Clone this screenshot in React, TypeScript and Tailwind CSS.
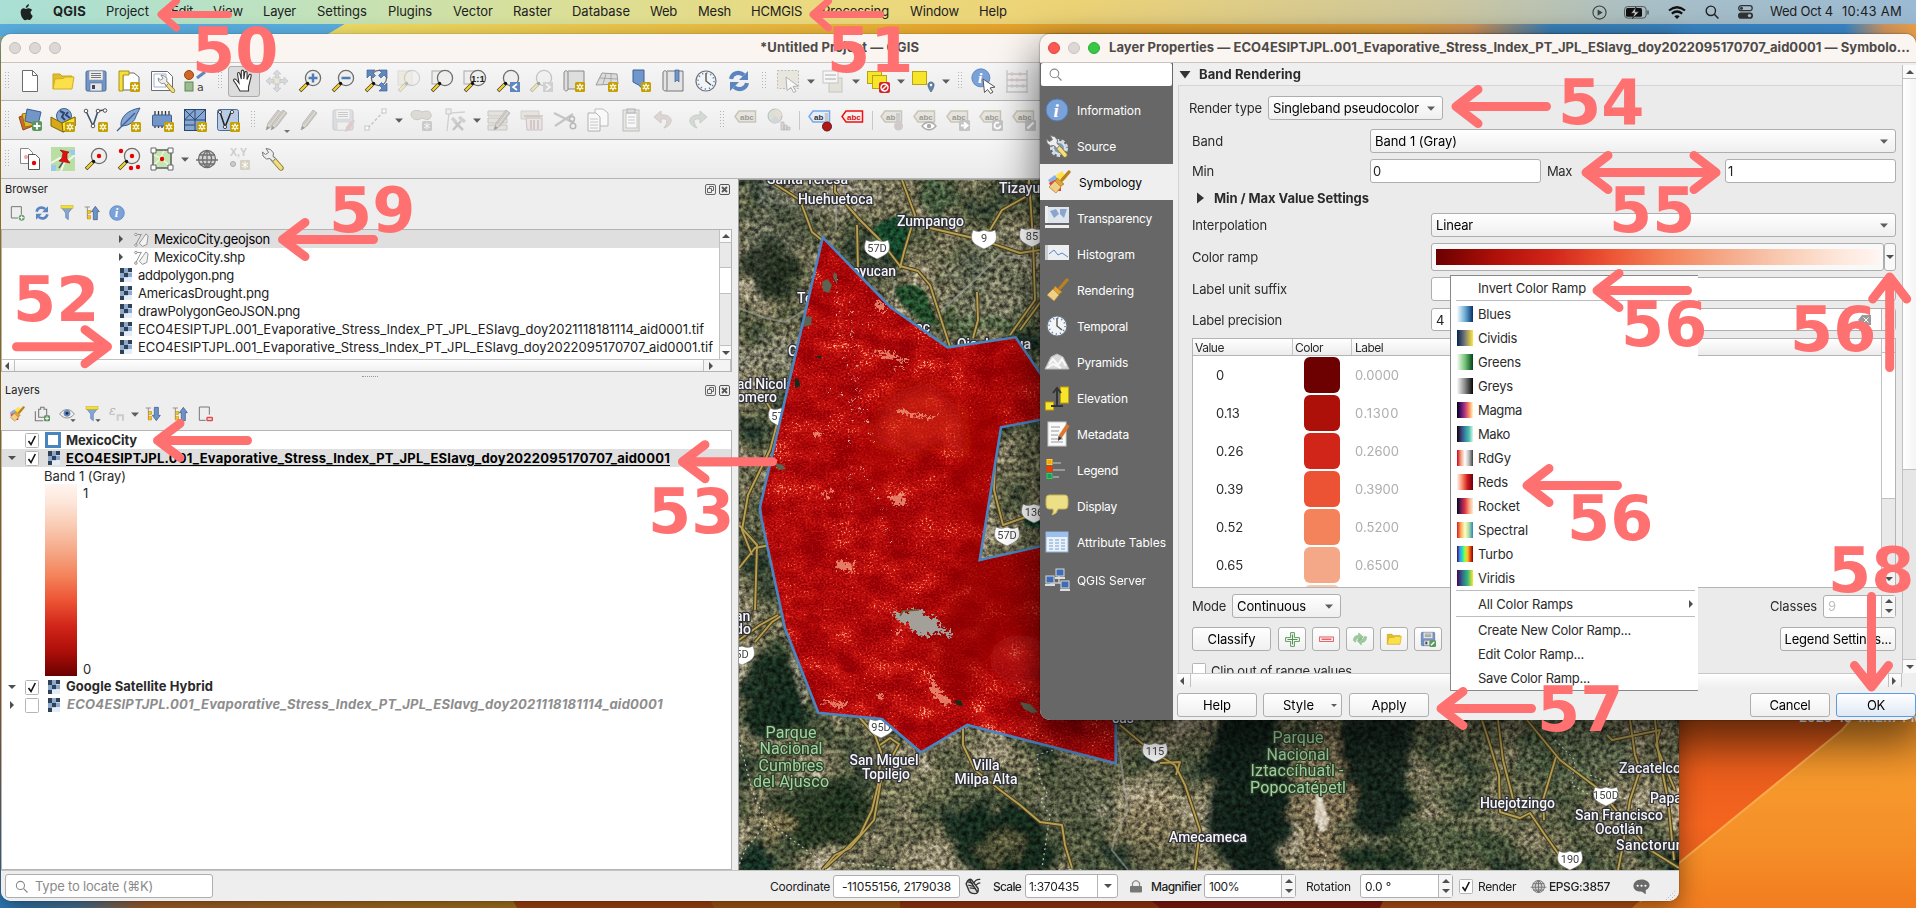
import React, { useLayoutEffect, useRef } from "react";

/* ---------- text with a fixed advance width ---------- */
function T({ w, c = "", flat = false, children }: { w?: number; c?: string; flat?: boolean; children: string }) {
  const ref = useRef<HTMLSpanElement>(null);
  useLayoutEffect(() => {
    const el = ref.current;
    if (!el || !w) return;
    el.style.letterSpacing = "0px";
    const natural = el.getBoundingClientRect().width;
    el.style.letterSpacing = `${(w - natural) / children.length}px`;
  }, [w, children]);
  return (
    <span ref={ref} className={`inline-block shrink-0 whitespace-pre ${flat ? "" : "pt-[2px]"} ${c}`}>
      {children}
    </span>
  );
}

type P = { children?: React.ReactNode; c?: string };
const Ico = ({ children, c = "w-6 h-6" }: P) => (
  <svg viewBox="0 0 24 24" className={`shrink-0 overflow-visible ${c}`} fill="none">
    {children}
  </svg>
);

/* ---------- icon parts ---------- */
const Star = ({ x = 13, y = 13 }: { x?: number; y?: number }) => (
  <g transform={`translate(${x} ${y})`}>
    <rect width="10" height="10" rx="1.5" fill="#c4a000" />
    <path d="M5 1.5v7M1.8 3.2l6.4 3.6M8.2 3.2L1.8 6.8" stroke="#fff" strokeWidth="1.5" />
    <circle cx="5" cy="5" r="1" fill="#c4a000" />
  </g>
);
const Lens = () => (
  <g>
    <path d="M10 14L2 22" stroke="#3b3b2a" strokeWidth="3.600" />
    <path d="M9 15L2.5 21.5" stroke="#f2cf2a" strokeWidth="2.4" />
    <circle cx="15" cy="9" r="7.6" fill="#eeeeec" stroke="#6e6e6e" strokeWidth="1.3" />
    <circle cx="9.6" cy="14.4" r="1.6" fill="#111" />
  </g>
);
const FolderShape = () => (
  <g>
    <path d="M2 20V5h7l2 2h10v4" fill="#e0bd2f" stroke="#c9a41a" />
    <path d="M2 20L4 10l8-.5L14 8h9l-2 12z" fill="#fbe04a" stroke="#d2ad22" />
  </g>
);
const Floppy = () => (
  <g>
    <rect x="2" y="2" width="20" height="20" rx="1.5" fill="#7394c4" stroke="#4c6c9c" />
    <rect x="5" y="2" width="14" height="9" fill="#eeeeec" stroke="#8c9ab0" strokeWidth=".6" />
    <path d="M7 4.5h10M7 6.5h10M7 8.5h10" stroke="#777" strokeWidth="1" />
    <rect x="6" y="14" width="12" height="8" fill="#e6e6e6" stroke="#4c6c9c" strokeWidth=".6" />
    <rect x="8" y="16" width="3" height="4" fill="#445" />
  </g>
);
const Pencil = ({ dx = 0 }: { dx?: number }) => (
  <g transform={`translate(${dx} 0)`}>
    <path d="M3 22l2-7L15 2l4 3L9 18z" fill="#d3cfc8" stroke="#b0aca6" />
    <path d="M6 16L16 3M8 18L18 5" stroke="#b0aca6" strokeWidth=".8" />
    <path d="M3 22l1.3-4 2.5 2z" fill="#888" />
  </g>
);
const Tag = ({ stroke = "#c9c5b8", fill = "#e6e4dc", text = "abc", color = "#999" }: { stroke?: string; fill?: string; text?: string; color?: string }) => (
  <g>
    <path d="M1 8.5L5 3h16.500v11H5z" fill={fill} stroke={stroke} strokeWidth="1.500" />
    <text x="6" y="11.500" fontFamily="Liberation Sans" fontWeight="bold" fontSize="8" fill={color}>
      {text}
    </text>
  </g>
);
const Sync = () => (
  <g fill="none" stroke="#5b85c0" strokeWidth="4">
    <path d="M4 10C5 4 12 2 17 6" />
    <path d="M20 14c-1 6-8 8-13 4" />
    <path d="M21 2v9h-9z" fill="#5b85c0" stroke="none" />
    <path d="M3 22v-9h9z" fill="#5b85c0" stroke="none" />
  </g>
);
const Info = () => (
  <g>
    <circle cx="12" cy="12" r="11" fill="#7aa2d8" stroke="#4f7cb8" />
    <text x="8.500" y="18.500" fontFamily="Liberation Serif" fontStyle="italic" fontWeight="bold" fontSize="19" fill="#fff">
      i
    </text>
  </g>
);
const WrenchShape = () => (
  <g>
    <path d="M12 12l8 9" stroke="#8a7b30" strokeWidth="5.400" strokeLinecap="round" />
    <path d="M12 12l8 9" stroke="#f0dd84" strokeWidth="3.600" strokeLinecap="round" />
    <path d="M5 1.500l4.500 1 3 3.500-.5 3.500 2.500 2-2.500 3-3-3-3.500.5-3.500-3L1.500 5l3 2.500 3-2z" fill="#eee" stroke="#777" strokeWidth="1" />
  </g>
);
const Globe = () => (
  <g fill="#d4d4d4" stroke="#6f6f6f" strokeWidth="1.3">
    <circle cx="12" cy="12" r="8.500" />
    <path d="M1 13h22M4 8h16M4.500 17h15M12 3.500v17M12 3.500c-6 5-6 12 0 17M12 3.500c6 5 6 12 0 17" fill="none" />
  </g>
);
const Clock = () => (
  <g>
    <circle cx="12" cy="12" r="10" fill="#f2f4f6" stroke="#6f7378" strokeWidth="1.2" />
    <circle cx="12" cy="12" r="8" fill="none" stroke="#5b85c0" strokeWidth="1.6" strokeDasharray="1.2 2.990" />
    <path d="M12 4v8l5 4" stroke="#555" strokeWidth="1.4" />
  </g>
);
const Raster = () => (
  <svg viewBox="0 0 12 14" className="h-[14px] w-[13px] shrink-0" shapeRendering="crispEdges">
    <rect width="12" height="14" fill="#c3d3ea" />
    <path d="M0 0h4v5h-4zM4 5h4v4h-4zM8 0h4v4h-4zM0 10h4v4h-4z" fill="#2f4157" />
    <path d="M0 5h4v5h-4zM4 0h4v5h-4zM8 5h4v5h-4z" fill="#8fa9cd" />
    <path d="M4 10h4v4h-4zM8 9h4v5h-4z" fill="#e4edf7" />
  </svg>
);
const Vect = () => (
  <Ico c="h-[15px] w-[15px]">
    <g stroke="#8f8f8f" strokeWidth="1.500" fill="#f3f3f3">
      <path d="M3 20L12 3M3 4h8" />
      <path d="M15 9l4-6 3.500 3-2 14-7 3-5-5z" />
      <circle cx="3" cy="21" r="2" />
      <circle cx="3" cy="4" r="2" />
    </g>
  </Ico>
);
const Brush = ({ palette = false }: { palette?: boolean }) => (
  <Ico c="h-full w-full">
    {palette && (
      <g>
        <path d="M9 5l6-4 5 7-8 6z" fill="#ffe34d" />
        <path d="M1 10l7-5 4 6-7 5z" fill="#8db0e4" />
        <path d="M2 13l6-3 6 5 0 6-8 0z" fill="#e8402e" />
      </g>
    )}
    <path d="M22 2l-7 8" stroke="#b98120" strokeWidth="3.400" strokeLinecap="round" />
    <path d="M10 8l7 6-4 3-5-5z" fill="#e0a33c" stroke="#a87820" strokeWidth=".7" />
    <path d="M8 11l6 6-5 6-7-6z" fill="#f0cf86" stroke="#b58a3a" strokeWidth=".8" />
  </Ico>
);
const Funnel = () => (
  <g>
    <path d="M3 3h18l-7 9v10l-4-3v-7z" fill="#84a6d6" stroke="#5a7db0" />
    <rect x="3" y="1" width="18" height="4" fill="#f7e02c" stroke="#bda71a" strokeWidth=".7" />
  </g>
);
const TreeArrow = ({ down = false }: { down?: boolean }) => (
  <g>
    <path d="M1 3h8M5 3v17M5 11h5M5 20h5" stroke="#888" strokeWidth="1.300" />
    <rect x="5" y="8" width="5" height="5" fill="#f5c51c" stroke="#b8860b" strokeWidth=".7" />
    <rect x="5" y="16" width="5" height="5" fill="#f5c51c" stroke="#b8860b" strokeWidth=".7" />
    <path d={down ? "M17 22l-6-8h3V2h6v12h3z" : "M17 2l-6 8h3v12h6V10h3z"} fill="#6c93c8" stroke="#35527e" />
  </g>
);
const Dot = ({ x, y, r = 2.2 }: { x: number; y: number; r?: number }) => <circle cx={x} cy={y} r={r} fill="#e60000" />;

/* ---------- toolbar pieces ---------- */
const Cell = ({ children, c = "w-[33px]" }: P) => <div className={`flex h-full shrink-0 items-center justify-center ${c}`}>{children}</div>;
const I = ({ children, c = "" }: P) => (
  <Cell>
    <Ico c={`w-6 h-6 ${c}`}>{children}</Ico>
  </Cell>
);
const Grip = ({ c = "w-4" }: P) => (
  <Cell c={c}>
    <svg width="6" height="18" viewBox="0 0 6 18">
      <path d="M1.500 0v18M4.500 0v18" stroke="#b4b4b4" strokeWidth="1" strokeDasharray="1 2" />
    </svg>
  </Cell>
);
const Caret = ({ c = "w-[12px]" }: P) => (
  <Cell c={c}>
    <svg width="8" height="5" viewBox="0 0 8 5">
      <path d="M0 .5h8L4 4.800z" fill="#5d5d5d" />
    </svg>
  </Cell>
);
const Sep = ({ c }: P) => (
  <Cell c={c}>
    <div className="h-[19px] w-px bg-[#c8c8c8]" />
  </Cell>
);

const bar = "flex shrink-0 items-center border-b border-[#b5b5b5] bg-linear-to-b from-[#f6f6f6] to-[#ebebeb]";
const off = "opacity-60";

function Toolbars() {
  return (
    <>
      <div className={`${bar} h-[38px] pb-px`}>
        <Grip c="w-[12.5px]" />
        <I>
          <path d="M4.500 1.500h10l5 5v16h-15z" fill="#fff" stroke="#6c6c6c" />
          <path d="M14.500 1.500v5h5" stroke="#6c6c6c" />
        </I>
        <I><FolderShape /></I>
        <I><Floppy /></I>
        <I>
          <path d="M6 4h11l5 4v13H6z" fill="#fff" stroke="#6c6c6c" />
          <path d="M2 2h10v4H6v16H2z" fill="#f4df3c" stroke="#a8941a" />
          <Star x={13} y={13} />
        </I>
        <I>
          <path d="M1.500 2.500h16l5 5v14h-21z" fill="#fff" stroke="#6c6c6c" />
          <path d="M4 5h12v13H4z" stroke="#9ab4da" />
          <g transform="translate(7 5) scale(.8)"><WrenchShape /></g>
        </I>
        <I>
          <circle cx="6" cy="6" r="4.500" fill="#d0662a" stroke="#9a4514" />
          <path d="M14 9l8-6" stroke="#5f86bd" strokeWidth="3" />
          <rect x="2" y="13" width="8" height="9" fill="#9bbb90" stroke="#5c8a52" />
          <text x="14" y="22" fontFamily="DejaVu Sans" fontSize="11" fill="#444">a</text>
        </I>
        <Grip />
        <Cell>
          <div className="flex h-[31px] w-[32px] items-center justify-center rounded-[3px] border border-[#acacac] bg-[#dcdcdc]">
            <Ico>
              <path
                d="M8 22l-4-7-2.500-3.500c0-2 2-2 3-.5L7 14 5.500 5c.2-2 2-2 2.500 0l1.300 5V2.500c.3-1.800 2.200-1.800 2.500 0V10l1-6.500c.4-1.500 2.300-1.300 2.300.3L15 10.500l2-4.500c.8-1.400 2.500-.8 2.200.8L17.500 14l-1 4v4z"
                fill="#fff"
                stroke="#333"
                strokeWidth="1.100"
              />
            </Ico>
          </div>
        </Cell>
        <I c={off}>
          <path d="M8 8h7v7H8z" fill="#e4dfc4" stroke="#c9c4ac" />
          <path d="M12 1l4 4h-2.500v4h-3V5H8zM12 23l4-4h-2.500v-4h-3v4H8zM1 12l4-4v2.500h4v3H5V16zM23 12l-4-4v2.500h-4v3h4V16z" fill="#c4c9d0" stroke="#a4a9b2" strokeWidth=".7" />
        </I>
        <I><Lens /><path d="M15 4.500v9M10.500 9h9" stroke="#4f7cb8" strokeWidth="2.500" /></I>
        <I><Lens /><path d="M10.500 9h9" stroke="#4f7cb8" strokeWidth="2.500" /></I>
        <I>
          <Lens />
          <path d="M3 1h8L8.500 3.500l3 3-2.500 2.500-3-3L3 9zM23 1h-8l2.500 2.500-3 3L17 9l3-3 3 3zM23 22v-8l-2.500 2.500-3-3L15 16l3 3-3 3z" fill="#5f86bd" stroke="#3f629a" strokeWidth=".7" />
        </I>
        <I c={off}><rect x="1" y="2" width="14" height="14" fill="#e9e5d2" stroke="#ccc" /><g opacity=".4"><Lens /></g></I>
        <I><rect x="2" y="2" width="10" height="13" fill="#eee" stroke="#aaa" /><Lens /></I>
        <I>
          <rect x="1" y="2" width="10" height="13" fill="#eee" stroke="#aaa" />
          <Lens />
          <text x="8" y="12.500" fontFamily="Liberation Sans" fontWeight="bold" fontSize="9.500" fill="#222">1:1</text>
        </I>
        <I>
          <Lens />
          <rect x="14" y="13" width="10" height="10" fill="#5f86bd" />
          <path d="M21 15l-4 3 4 3" stroke="#fff" strokeWidth="1.700" />
        </I>
        <I c="opacity-35">
          <Lens />
          <rect x="14" y="13" width="10" height="10" fill="#999" />
          <path d="M17 15l4 3-4 3" stroke="#fff" strokeWidth="1.700" />
        </I>
        <I><path d="M2 4c0-3 4-3 4 0v16c0 3-4 2-4 0zM6 2h16v18H6" fill="#dedede" stroke="#888" /><Star x={13} y={13} /></I>
        <I>
          <path d="M7 4l15 1 1 10-22 1z" fill="#dcdcdc" stroke="#9a9a9a" />
          <path d="M5 9l17 1M11 5L8 15M16 5v11" stroke="#9a9a9a" strokeWidth=".8" />
          <Star x={13} y={13} />
        </I>
        <I><path d="M5 1h11v20l-5.500-5L5 13z" fill="#6f97cc" stroke="#3c5f94" /><Star x={13} y={13} /></I>
        <I>
          <path d="M2 4c0-3 4-3 4 0v16c0 3-4 2-4 0zM6 2h16v20H5" fill="#e4e4e4" stroke="#777" />
          <path d="M14 1h4v12l-2-2-2 2z" fill="#6f97cc" stroke="#3c5f94" strokeWidth=".7" />
        </I>
        <I><Clock /></I>
        <I><Sync /></I>
        <Grip />
        <I c={off}>
          <rect x="1.500" y="1.500" width="21" height="18" fill="#e2dfd0" stroke="#999" strokeDasharray="2 1.500" />
          <path d="M10 8l12 9-5 .5 3 5-2.500 1-2.500-5-4 3z" fill="#fff" stroke="#888" />
        </I>
        <Caret />
        <I c={off}>
          <rect x="8" y="9" width="13" height="14" fill="#ddd9c8" stroke="#aaa" />
          <rect x="2" y="2" width="15" height="12" fill="#fafafa" stroke="#aaa" />
          <path d="M4 6h11M4 10h11" stroke="#bbb" strokeWidth="2" />
        </I>
        <Caret />
        <I>
          <rect x="1.500" y="2.500" width="14" height="12" fill="#f7e52c" stroke="#b9a40e" />
          <rect x="6.500" y="6.500" width="14" height="13" fill="#f7e52c" stroke="#b9a40e" />
          <rect x="13" y="13" width="11" height="11" rx="2" fill="#d0262a" />
          <circle cx="18.500" cy="18.500" r="3.500" stroke="#fff" strokeWidth="1.400" />
          <path d="M16 21l5-5" stroke="#fff" strokeWidth="1.400" />
        </I>
        <Caret />
        <I>
          <rect x="1.500" y="2.500" width="14" height="13" fill="#f7e52c" stroke="#b9a40e" />
          <path d="M20 23c-5-7-3-10 0-10s5 3 0 10z" fill="#6485aa" stroke="#3e5c7e" strokeWidth=".7" />
          <circle cx="20" cy="16" r="1.200" fill="#fff" />
        </I>
        <Caret />
        <Grip />
        <I>
          <g transform="translate(-1 -1) scale(.82)"><Info /></g>
          <path d="M11 10l12 8-5 1 3 4-2.500 1.500-3-4-3 3z" fill="#fff" stroke="#555" />
        </I>
        <I c="opacity-45">
          <path d="M2 1v22M22 1v22M1 23h22M2 5h20M2 11h20M2 17h20" stroke="#999" strokeWidth="1.300" />
          <path d="M7 5h.1M15 5h.1M7 11h.1M12 11h.1" stroke="#c99" strokeWidth="3.600" strokeLinecap="round" />
          <path d="M7 17h.1M12 17h.1M18 17h.1" stroke="#aaa" strokeWidth="3.600" strokeLinecap="round" />
        </I>
      </div>

      <div className={`${bar} h-[39px]`}>
        <Grip c="w-[12.5px]" />
        <I>
          <path d="M1 9l9-3 5 12-10 4z" fill="#cf6a2c" stroke="#8f4414" />
          <path d="M4 6l10-2 3 13-10 2z" fill="#e6b820" stroke="#957610" />
          <path d="M9 1l14 3-3 13-13-4z" fill="#7296c8" stroke="#3c5f94" />
          <rect x="14" y="13" width="10" height="10" rx="2" fill="#5d9460" />
          <path d="M19 14.500v7M15.500 18h7" stroke="#fff" strokeWidth="1.800" />
        </I>
        <I>
          <circle cx="13" cy="8" r="7.500" fill="#86a6d4" stroke="#3c5f94" />
          <path d="M9 3l4 2-2 4 3 3M17 4l-2 3 4 3" stroke="#2d466e" strokeWidth="2" />
          <path d="M0 9l11 6 13-6v9l-12 6L0 18z" fill="#d6a916" stroke="#7f640a" />
          <path d="M11 15l13-6v9l-12 6z" fill="#f7e52c" stroke="#7f640a" />
          <Star x={14} y={14} />
        </I>
        <I>
          <path d="M2 3l7 15M9 18l5-15 6-1" stroke="#3e526c" strokeWidth="1.600" />
          <circle cx="2" cy="3" r="1.800" fill="#fff" stroke="#555" />
          <circle cx="9" cy="18" r="1.800" fill="#fff" stroke="#555" />
          <circle cx="14" cy="3" r="1.800" fill="#fff" stroke="#555" />
          <circle cx="21" cy="2.500" r="1.800" fill="#fff" stroke="#555" />
          <Star x={14} y={14} />
        </I>
        <I>
          <path d="M23 0C10 2 3 10 4 18c9 0 14-5 15-10z" fill="#86a6d4" stroke="#3c5f94" />
          <path d="M0 23L18 5" stroke="#3c5f94" strokeWidth="1.200" />
          <Star x={14} y={14} />
        </I>
        <I>
          <path d="M5 3v17M8.500 3v17M12 3v17M15.500 3v17M19 3v8" stroke="#333" strokeWidth="1.300" />
          <rect x="2.500" y="7" width="19" height="11" rx="1" fill="#7396c8" stroke="#3c5f94" />
          <Star x={14} y={14} />
        </I>
        <I>
          <rect x="1.500" y="1.500" width="21" height="21" fill="#86a6d4" stroke="#2d466e" />
          <path d="M1.500 12h21M12 1.500v21M1.500 1.500L12 12M22.500 1.500L12 12M1.500 17h10M1.500 12L12 1.500" stroke="#2d466e" />
          <Star x={14} y={14} />
        </I>
        <I>
          <rect x="1.500" y="1.500" width="21" height="21" rx="2" fill="#b9cce6" stroke="#4c6c9c" />
          <path d="M4 4l5 15L15 4" stroke="#222" strokeWidth="1.500" />
          <circle cx="4" cy="4" r="1.600" fill="#fff" stroke="#444" />
          <circle cx="9" cy="19" r="1.600" fill="#fff" stroke="#444" />
          <circle cx="16" cy="4" r="1.600" fill="#fff" stroke="#444" />
          <Star x={14} y={14} />
        </I>
        <Grip />
        <I c="opacity-80">
          <Pencil dx={-2} />
          <Pencil dx={3} />
          <path d="M19 22h6l-3 3z" fill="#555" />
        </I>
        <I c="opacity-80"><Pencil dx={0} /></I>
        <I>
          <g opacity=".45">
            <rect x="2" y="2" width="20" height="20" rx="1.500" fill="#c4c8ce" stroke="#9a9ea4" />
            <rect x="5" y="2" width="14" height="9" fill="#f4f4f4" stroke="#aaa" strokeWidth=".6" />
            <path d="M7 4.500h10M7 6.500h10M7 8.500h10" stroke="#999" />
            <rect x="6" y="14" width="12" height="8" fill="#eee" stroke="#aaa" strokeWidth=".6" />
            <path d="M22 11l-7 8-1 5 4-2 6-9z" fill="#c9a0a0" />
          </g>
        </I>
        <I c="opacity-80">
          <path d="M4 20L20 3" stroke="#bbb" strokeWidth="1.500" strokeDasharray="3 2" />
          <rect x="1" y="18" width="4" height="4" fill="#fff" stroke="#bbb" />
          <rect x="18" y="1" width="4" height="4" fill="#fff" stroke="#bbb" />
        </I>
        <Caret />
        <I c="opacity-60"><path d="M2 7c0-6 8-5 11-3 5-2 10-1 9 5-2 4-6 2-9 1-4 3-10 2-11-3z" fill="#cfcdc0" stroke="#aaa" /><g opacity=".7"><rect x="13" y="13" width="10" height="10" rx="1.500" fill="#999" /><path d="M18 14.500v7M15 16l6 4M21 16l-6 4" stroke="#fff" /></g></I>
        <I c="opacity-60">
          <path d="M5 23L7 5l16-1M7 5" stroke="#bbb" strokeWidth="1.300" />
          <rect x="4" y="1" width="5" height="5" fill="#eee" stroke="#aaa" />
          <path d="M11 22L19 13M12 13l9 9" stroke="#aaa" strokeWidth="2.500" />
          <path d="M17 9l6 5M10 10l4 4" stroke="#bbb" strokeWidth="3.500" />
        </I>
        <Caret />
        <I c="opacity-80">
          <path d="M1 3h19v5H1zM1 10h19v5H1zM1 17h19v5H1z" fill="#e2dfd6" stroke="#bbb" />
          <Pencil dx={4} />
        </I>
        <I c={off}>
          <path d="M1 3h18v8H1z" fill="#dedad0" stroke="#bbb" />
          <path d="M6 10h16v12H7z" fill="#e6dfdf" stroke="#b4a0a0" />
          <path d="M4 8h19M11 12v9M14 12v9M18 12v9" stroke="#b4a0a0" strokeWidth="1.500" />
        </I>
        <I c="opacity-80">
          <path d="M1 5l20 10M2 18L20 6" stroke="#bbb" strokeWidth="2.200" />
          <circle cx="20" cy="18" r="2.800" stroke="#aaa" strokeWidth="1.500" />
          <circle cx="19" cy="11" r="2.500" stroke="#aaa" strokeWidth="1.500" />
        </I>
        <I c={off}><path d="M9 1h8l5 4v13H9z" fill="#fff" stroke="#999" /><path d="M2 5h8l4 4v14H2z" fill="#fff" stroke="#888" /><path d="M4 11h8M4 14h8M4 17h8M4 20h8" stroke="#aaa" /></I>
        <I c={off}><rect x="4" y="2" width="16" height="21" fill="#e4e2da" stroke="#999" /><rect x="7" y="5" width="11" height="15" fill="#fff" stroke="#aaa" /><rect x="8" y="1" width="8" height="4" fill="#ccc" stroke="#888" /><path d="M9 9h7M9 12h7M9 15h7" stroke="#aaa" /></I>
        <I c={off}><path d="M9 3L2 9l7 6v-4c6-1 8 2 3 9 10-3 10-14-3-13z" fill="#cfc4c0" stroke="#b9aeaa" /></I>
        <I c={off}><path d="M15 3l7 6-7 6v-4c-6-1-8 2-3 9C2 17 2 6 15 7z" fill="#c2cac4" stroke="#a9b4ac" /></I>
        <Grip />
        <I><Tag /></I>
        <I c="opacity-80">
          <circle cx="8" cy="8" r="7" fill="#d4dccf" stroke="#aaa" />
          <path d="M8 8V1a7 7 0 017 7z" fill="#e4d8cc" /><path d="M8 8l5 5a7 7 0 01-10 0z" fill="#ccd0d8" />
          <path d="M14 14h3v8h-3zM17 17h3v5h-3zM20 19h3v3h-3z" fill="#d9cdcd" stroke="#aaa" strokeWidth=".7" />
        </I>
        <Sep c="w-[8px]" />
        <I>
          <Tag stroke="#78a8e8" fill="#e4eefb" text="ab" color="#333" />
          <path d="M18.500 5v12" stroke="#c8c8c8" strokeWidth="3.500" />
          <circle cx="19" cy="18.500" r="4.500" fill="#b01818" stroke="#701010" />
        </I>
        <I><Tag stroke="#f01010" fill="#fdeeee" color="#d01010" /></I>
        <Sep c="w-[6px]" />
        <I><Tag text="ab" /><path d="M18 5v14" stroke="#ccc" strokeWidth="4" /><circle cx="18.500" cy="18" r="4.500" fill="#d0caca" /></I>
        <I><Tag /><path d="M9 18c4-5 10-5 14 0-4 5-10 5-14 0z" fill="#fff" stroke="#aaa" strokeWidth="1.300" /><circle cx="16" cy="18" r="2.200" fill="#aaa" /></I>
        <I><Tag /><rect x="13" y="12" width="11" height="11" rx="1.500" fill="#c4c4c4" /><path d="M15 17.500h5M18 14.500l3.500 3-3.500 3" stroke="#fff" strokeWidth="2" /></I>
        <I><Tag /><rect x="13" y="12" width="11" height="11" rx="1.500" fill="#c4c4c4" /><path d="M21.500 17.500a3 3 0 11-1.500-2.600" stroke="#fff" strokeWidth="1.800" /></I>
        <I><Tag /><rect x="13" y="12" width="11" height="11" rx="1.500" fill="#c4c4c4" /><path d="M15.500 20.500l6-6" stroke="#fff" strokeWidth="2.200" /></I>
      </div>

      <div className={`${bar} h-[39px]`}>
        <Grip c="w-[12.5px]" />
        <I>
          <path d="M2.500 1.500h8l4 4v11h-12z" fill="#fff" stroke="#888" />
          <circle cx="8" cy="10" r="2" fill="#f7a0a0" />
          <path d="M10.500 7.500h7l4 4v11h-11z" fill="#fff" stroke="#555" />
          <Dot x={16} y={16} />
        </I>
        <I>
          <rect x="0" y="0" width="24" height="24" fill="#b9dfa4" />
          <path d="M0 16l9-5 6 4 9-7M10 24l4-10" stroke="#f2f6ee" strokeWidth="2" />
          <path d="M18 3h6v5h-4zM0 18h5v6H0z" fill="#9cc8ee" />
          <path d="M9 3l9 2-2 2 0 5 3 4-11-2 3-3 1-5z" fill="#e01010" stroke="#900" strokeWidth=".6" />
          <path d="M12 15l-4 6" stroke="#555" strokeWidth="1.500" />
        </I>
        <I><Lens /><Dot x={15} y={9} /></I>
        <I><Lens /><Dot x={15} y={9} /><Dot x={4} y={4} /><Dot x={14} y={21} /><Dot x={21} y={20} /></I>
        <I>
          <rect x="3" y="3" width="18" height="18" fill="#c5e6b0" stroke="#666" strokeWidth="1.600" />
          <path d="M4 18l5-5 5-9M4 8l8 4 8 7" stroke="#f4f8e8" strokeWidth="1.200" />
          <path d="M1 1h5v5H1zM18 1h5v5h-5zM1 18h5v5H1zM18 18h5v5h-5z" fill="#fff" stroke="#666" />
          <Dot x={12} y={12} />
        </I>
        <Caret />
        <I><Globe /></I>
        <I>
          <text x="2" y="9" fontFamily="Liberation Sans" fontWeight="bold" fontSize="10.500" fill="#ccc">X,Y</text>
          <circle cx="5" cy="17" r="2.500" fill="#ccc" stroke="#aaa" />
          <rect x="12" y="13" width="10" height="10" rx="1" fill="#d5d2c4" />
          <path d="M17 14.500v7M14 16l6 4M20 16l-6 4" stroke="#fff" />
        </I>
        <I><WrenchShape /></I>
      </div>
    </>
  );
}

/* ---------- small controls ---------- */
const DockHead = ({ title, w }: { title: string; w: number }) => (
  <div className="flex h-[21px] shrink-0 items-center pl-1 text-[11px] text-[#222]">
    <T w={w} flat>{title}</T>
    <div className="ml-auto flex gap-[3px] pr-2">
      <svg width="11" height="11" viewBox="0 0 11 11" fill="none" stroke="#666">
        <rect x=".5" y=".5" width="10" height="10" rx="1.500" />
        <path d="M4.500 4V2.500h4v4H7M2.500 4.500h4v4h-4z" />
      </svg>
      <svg width="11" height="11" viewBox="0 0 11 11" fill="none" stroke="#555">
        <rect x=".5" y=".5" width="10" height="10" rx="1.500" />
        <path d="M3 3l5 5M8 3L3 8" strokeWidth="1.800" />
      </svg>
    </div>
  </div>
);
const MiniIcon = ({ children, c = "w-[25.2px]" }: P) => (
  <Cell c={c}>
    <Ico c="h-4 w-4">{children}</Ico>
  </Cell>
);
const Arrow = ({ d }: { d: "up" | "down" | "left" | "right" }) => {
  const p = { up: "M1 7h8L5 3z", down: "M1 3h8L5 7z", left: "M7 1v8L3 5z", right: "M3 1v8l4-4z" }[d];
  return (
    <svg width="10" height="10" viewBox="0 0 10 10" className="shrink-0">
      <path d={p} fill="#4f4f4f" />
    </svg>
  );
};
const Check = ({ on = true }: { on?: boolean }) => (
  <svg width="14" height="15" viewBox="0 0 14 15" className="shrink-0">
    <rect x=".5" y=".5" width="13" height="14" rx="1" fill="#fff" stroke="#b5b5b5" />
    {on && <path d="M3.500 8l2.500 3.500L10.300 3" fill="none" stroke="#111" strokeWidth="1.600" />}
  </svg>
);

const files: [string, number][] = [
  ["addpolygon.png", 96],
  ["AmericasDrought.png", 131],
  ["drawPolygonGeoJSON.png", 162],
  ["ECO4ESIPTJPL.001_Evaporative_Stress_Index_PT_JPL_ESIavg_doy2021118181114_aid0001.tif", 566],
  ["ECO4ESIPTJPL.001_Evaporative_Stress_Index_PT_JPL_ESIavg_doy2022095170707_aid0001.tif", 575],
];

function BrowserDock() {
  return (
    <section className="flex h-[194px] shrink-0 flex-col">
      <DockHead title="Browser" w={43} />
      <div className="flex h-[29px] shrink-0 items-center pb-[4px] pl-[3px]">
        <MiniIcon><path d="M3.500 2.500h15v12M3.500 2.500v17h10" stroke="#777" strokeWidth="1.500" /><circle cx="19" cy="19" r="4.500" fill="#6c9c6c" /><path d="M19 16v6M16 19h6" stroke="#fff" strokeWidth="1.500" /></MiniIcon>
        <MiniIcon><Sync /></MiniIcon>
        <MiniIcon><Funnel /></MiniIcon>
        <MiniIcon><TreeArrow /></MiniIcon>
        <MiniIcon><Info /></MiniIcon>
      </div>
      <div className="flex h-[143px] w-[731px] shrink-0 flex-col border border-[#b4b4b4] bg-white">
        <div className="flex h-[129px]">
          <div className="flex w-[717px] flex-col text-[13px] text-[#1c1c1c]">
            {[
              ["MexicoCity.geojson", 116, "bg-[#dfdfdf] text-black"],
              ["MexicoCity.shp", 91, ""],
            ].map(([n, w, c]) => (
              <div key={n as string} className={`flex h-[18px] items-center pl-[114px] ${c}`}>
                <Arrow d="right" />
                <div className="w-[8px]" />
                <Vect />
                <div className="w-[5px]" />
                <T w={w as number}>{n as string}</T>
              </div>
            ))}
            {files.map(([n, w]) => (
              <div key={n} className="flex h-[18px] items-center gap-[6px] pl-[117px]">
                <Raster />
                <T w={w}>{n}</T>
              </div>
            ))}
          </div>
          <div className="flex w-[12px] flex-col items-center border-l border-[#c0c0c0] bg-[#e9e9e9]">
            <div className="flex h-[13px] w-full items-center justify-center border-b border-[#c0c0c0] bg-[#fafafa]"><Arrow d="up" /></div>
            <div className="h-[24px]" />
            <div className="h-[27px] w-full border-y border-[#c0c0c0] bg-white" />
            <div className="mt-auto flex h-[14px] w-full items-center justify-center border-t border-[#c0c0c0] bg-[#fafafa]"><Arrow d="down" /></div>
          </div>
        </div>
        <div className="flex flex-1 items-center border-t border-[#c0c0c0] bg-linear-to-b from-white to-[#f0f0f0]">
          <div className="flex h-full w-[13px] items-center border-r border-[#c0c0c0]"><Arrow d="left" /></div>
          <div className="ml-auto flex h-full w-[28px] items-center border-x border-[#c0c0c0] bg-[#f4f4f4] pl-0.5"><Arrow d="right" /></div>
        </div>
      </div>
    </section>
  );
}

const Disc = ({ open, hidden = false }: { open?: boolean; hidden?: boolean }) => (
  <div className="flex w-[23px] items-center pl-[5px]">{!hidden && <Arrow d={open ? "down" : "right"} />}</div>
);

function LayersDock() {
  return (
    <section className="flex min-h-0 flex-1 flex-col">
      <DockHead title="Layers" w={35} />
      <div className="flex h-[29px] shrink-0 items-center pb-[3px] pl-[3px]">
        <Cell c="w-[25.2px]"><div className="h-4 w-4"><Brush palette /></div></Cell>
        <MiniIcon><path d="M2 8v14h12M7 5v12h12V5h-4V2h-5v3z" stroke="#777" strokeWidth="1.600" /><rect x="15" y="14" width="9" height="9" rx="2" fill="#5d9460" /><path d="M19.500 15.500v6M16.500 18.500h6" stroke="#fff" strokeWidth="1.500" /></MiniIcon>
        <MiniIcon><path d="M1 12c6-9 16-9 22 0-6 8-16 8-22 0z" fill="#eee" stroke="#888" strokeWidth="1.300" /><circle cx="12" cy="11" r="5" fill="#5f86bd" /><circle cx="12" cy="11" r="2" fill="#223" /><path d="M17 20h8l-4 4z" fill="#555" /></MiniIcon>
        <MiniIcon><Funnel /><path d="M17 20h8l-4 4z" fill="#555" /></MiniIcon>
        <MiniIcon><text x="0" y="14" fontFamily="DejaVu Serif" fontStyle="italic" fontSize="19" fill="#b5b5b5">ε</text><path d="M13 22v-8h8v8" stroke="#ccc" strokeWidth="3" /></MiniIcon>
        <Caret c="w-[10px]" />
        <MiniIcon c="w-[27px]"><TreeArrow down /></MiniIcon>
        <MiniIcon><TreeArrow /></MiniIcon>
        <MiniIcon><path d="M18.500 13V1.500h-15v20H13" stroke="#777" strokeWidth="1.500" /><rect x="14" y="16" width="10" height="7" rx="2" fill="#e04848" /><path d="M16 19.500h6" stroke="#fff" strokeWidth="2" /></MiniIcon>
      </div>
      <div className="flex w-[731px] flex-1 flex-col border border-[#b4b4b4] bg-white text-[13px] font-bold text-[#2a2a2a]">
        <div className="flex h-[18px] items-center">
          <Disc hidden />
          <Check />
          <div className="ml-[6px] h-[16px] w-[16px] border-[3px] border-[#4a84bd] bg-white" />
          <T w={71} c="ml-[5px]">MexicoCity</T>
        </div>
        <div className="flex h-[18px] items-center bg-[#dfdfdf] text-black">
          <Disc open />
          <Check />
          <div className="ml-[8px]"><Raster /></div>
          <T w={604} c="ml-[6px] underline underline-offset-2">ECO4ESIPTJPL.001_Evaporative_Stress_Index_PT_JPL_ESIavg_doy2022095170707_aid0001</T>
        </div>
        <div className="flex h-[17px] items-center pl-[42px] font-normal">
          <T w={82}>Band 1 (Gray)</T>
        </div>
        <div className="flex h-[194px] pl-[43px] font-normal">
          <div className="h-[192px] w-[32px] bg-[linear-gradient(to_top,#6b0000,#ad0f09_13%,#d12519_26%,#ec5334_39%,#f4825a_52%,#f5a887_65%,#f9cab2_78%,#fde5d8_90%,#fff5f0)]" />
          <div className="flex h-[194px] flex-col justify-between pl-[6px]">
            <span className="leading-[18px]">1</span>
            <span className="leading-[17px]">0</span>
          </div>
        </div>
        <div className="flex h-[18px] items-center">
          <Disc open />
          <Check />
          <div className="ml-[8px]"><Raster /></div>
          <T w={147} c="ml-[6px]" flat>Google Satellite Hybrid</T>
        </div>
        <div className="flex h-[18px] items-center text-[#8d8d8d]">
          <Disc />
          <Check on={false} />
          <div className="ml-[8px]"><Raster /></div>
          <T w={596} c="ml-[7px] italic" flat>ECO4ESIPTJPL.001_Evaporative_Stress_Index_PT_JPL_ESIavg_doy2021118181114_aid0001</T>
        </div>
      </div>
    </section>
  );
}

/* ---------- map ---------- */
const AREA =
  "822.7,237.3 890,306.7 947.7,347.3 1015.7,337.3 1042,376 1110,420 1042,419.500 1001,427.300 979.700,560 1042,546 1116,560 1115.700,763.300 967.300,725 921,752.300 881.700,719 818.300,712.700 785,628.300 761.700,520 760,507.300";

const roads = [
  "M775 184L800 200L812 232L822 240",
  "M835 180V192L860 220L880 240L900 266L918 271L930 285L950 347",
  "M902 180L915 215L904 252L900 268",
  "M857 225L858 270",
  "M930 228L982 240L1020 253L1040 250",
  "M990 230L1002 210L1027 196L1029 180L1033 240L1035 300L1010 335",
  "M977 292L978 320L973 338",
  "M1042 300L1020 330",
  "M765 400L778 420L770 450L748 495L742 530L752 555",
  "M739 525L757 545L755 610",
  "M739 568L755 548L770 545",
  "M739 640L760 625L778 615",
  "M755 642L772 622L781 616",
  "M996 440L994 490L1003 525L1040 512",
  "M858 716L875 735L881 752L878 785L872 810L860 835L845 850L825 868",
  "M881 780L874 820L850 848L835 855L822 870",
  "M880 745L890 738L899 744L893 755",
  "M963 728L963 745L975 770L1000 790L1020 805L1040 822L1062 825L1065 845L1072 868",
  "M1120 725L1150 750L1175 765L1185 785L1200 830L1195 870",
  "M1160 763L1180 762L1176 775",
  "M1482 720L1490 745L1499 775L1500 812L1520 818L1530 813L1545 835L1570 870",
  "M1498 720L1503 760L1512 795L1516 812",
  "M1527 720L1560 760L1600 790L1620 815L1650 850L1679 868",
  "M1556 757L1543 800L1544 820",
  "M1607 735L1612 740L1660 730L1656 745L1675 790",
  "M1630 720L1635 755L1640 770L1630 800L1622 850L1618 870",
  "M1655 720L1658 750L1668 800L1674 860",
];

const Lab = ({ x, y, t, w, a = "start", g = false, s = 14 }: { x: number; y: number; t: string; w?: number; a?: "start" | "middle"; g?: boolean; s?: number }) => (
  <text x={x} y={y} textAnchor={a} textLength={w} fontSize={s} fontFamily="Roboto" fontWeight={g ? "400" : "500"} fill={g ? "#a4d3a2" : "#f6f6f6"} stroke={g ? "#2b4128" : "#2f303a"} strokeWidth="2.600" strokeLinejoin="round" paintOrder="stroke">
    {t}
  </text>
);
const Shield = ({ x, y, t }: { x: number; y: number; t: string }) => (
  <g>
    <path
      d={`M${x - 11} ${y - 8}q5 3 11 0q6 3 11 0q3 8 0 12q-2 3-11 7q-9-4-11-7q-3-4 0-12z`}
      fill="#fff"
      stroke="#777"
      strokeWidth=".6"
    />
    <text x={x} y={y + 4} textAnchor="middle" fontFamily="Roboto" fontSize="11" fill="#444">
      {t}
    </text>
  </g>
);

function MapCanvas() {
  return (
    <svg width="941" height="691" viewBox="738 179 941 691" className="block shrink-0">
      <defs>
        <filter id="blur" x="-50%" y="-50%" width="200%" height="200%"><feGaussianBlur stdDeviation="9" /></filter>
        <filter id="soft" x="-50%" y="-50%" width="200%" height="200%"><feGaussianBlur stdDeviation="1" /></filter>
        <filter id="rough" x="-20%" y="-20%" width="140%" height="140%">
          <feTurbulence type="fractalNoise" baseFrequency="0.05" numOctaves="4" seed="5" result="n" />
          <feDisplacementMap in="SourceGraphic" in2="n" scale="45" xChannelSelector="R" yChannelSelector="G" />
          <feGaussianBlur stdDeviation="3" />
        </filter>
        <filter id="bits" x="-20%" y="-20%" width="140%" height="140%">
          <feTurbulence type="fractalNoise" baseFrequency="0.3" numOctaves="2" seed="5" result="n" />
          <feDisplacementMap in="SourceGraphic" in2="n" scale="14" xChannelSelector="R" yChannelSelector="G" />
        </filter>
        <filter id="land" x="0" y="0" width="100%" height="100%" colorInterpolationFilters="sRGB">
          <feTurbulence type="fractalNoise" baseFrequency="0.018" numOctaves="6" seed="31" />
          <feColorMatrix values="1.5 0 0 0 -.25  1.5 0 0 0 -.25  1.5 0 0 0 -.25  0 0 0 0 1" />
          <feComponentTransfer>
            <feFuncR type="table" tableValues=".1 .2 .31 .39 .47 .58 .68" />
            <feFuncG type="table" tableValues=".18 .25 .34 .39 .45 .55 .64" />
            <feFuncB type="table" tableValues=".14 .19 .24 .29 .35 .45 .55" />
          </feComponentTransfer>
        </filter>
        <filter id="grain" x="0" y="0" width="100%" height="100%" colorInterpolationFilters="sRGB">
          <feTurbulence type="fractalNoise" baseFrequency="0.22" numOctaves="4" seed="4" />
          <feColorMatrix values="0 1.8 0 0 -.4  0 1.8 0 0 -.4  0 1.8 0 0 -.4  0 0 0 0 1" />
        </filter>
        <filter id="heat" x="0" y="0" width="100%" height="100%" colorInterpolationFilters="sRGB">
          <feTurbulence type="fractalNoise" baseFrequency="0.5 0.55" numOctaves="2" seed="8" result="f" />
          <feTurbulence type="fractalNoise" baseFrequency="0.035 0.05" numOctaves="5" seed="23" result="c" />
          <feComposite in="f" in2="c" operator="arithmetic" k1="0" k2=".62" k3=".48" k4="0" result="m" />
          <feColorMatrix in="m" values="2.500 0 0 0 -.98  2.500 0 0 0 -.98  2.500 0 0 0 -.98  0 0 0 0 1" />
          <feComponentTransfer>
            <feFuncR type="table" tableValues=".58 .65 .69 .73 .78 .82 .9 .95 .97" />
            <feFuncG type="table" tableValues="0 .02 .04 .05 .08 .12 .3 .55 .72" />
            <feFuncB type="table" tableValues=".02 .03 .04 .05 .07 .09 .2 .42 .6" />
          </feComponentTransfer>
        </filter>
        <clipPath id="aoi"><polygon points={AREA} /></clipPath>
      </defs>
      <rect x="738" y="179" width="941" height="691" fill="#4c5138" filter="url(#land)" />
      <g filter="url(#rough)">
        <ellipse cx="770" cy="268" rx="28" ry="32" fill="#14241a" opacity=".85" />
        <ellipse cx="780" cy="225" rx="40" ry="22" fill="#3f4c3a" opacity=".6" />
        <ellipse cx="775" cy="355" rx="45" ry="18" fill="#8b8878" opacity=".6" />
        <ellipse cx="990" cy="285" rx="50" ry="45" fill="#777a66" opacity=".5" />
        <ellipse cx="820" cy="195" rx="70" ry="14" fill="#8f8d80" opacity=".5" />
        <ellipse cx="935" cy="200" rx="16" ry="20" fill="#2f5034" opacity=".6" />
        <ellipse cx="985" cy="325" rx="45" ry="10" fill="#3f5a38" opacity=".6" />
        <ellipse cx="775" cy="695" rx="32" ry="50" fill="#0f2319" opacity=".9" />
        <ellipse cx="820" cy="815" rx="55" ry="35" fill="#1b2c1d" opacity=".8" />
        <ellipse cx="755" cy="862" rx="20" ry="16" fill="#12271c" opacity=".9" />
        <ellipse cx="775" cy="822" rx="14" ry="12" fill="#8a7c55" opacity=".9" />
        <ellipse cx="930" cy="790" rx="60" ry="18" fill="#6e7150" opacity=".5" />
        <ellipse cx="1005" cy="845" rx="52" ry="42" fill="#13261a" opacity=".9" />
        <ellipse cx="1005" cy="848" rx="20" ry="16" fill="#5e5c3e" opacity=".9" />
        <ellipse cx="1075" cy="800" rx="36" ry="40" fill="#3f4a32" opacity=".7" />
        <ellipse cx="1150" cy="830" rx="36" ry="40" fill="#857656" opacity=".5" />
        <ellipse cx="1250" cy="790" rx="42" ry="95" fill="#0b1c14" opacity=".95" />
        <ellipse cx="1378" cy="770" rx="36" ry="70" fill="#0b1c14" opacity=".9" />
        <ellipse cx="1378" cy="862" rx="38" ry="14" fill="#10241a" opacity=".85" />
        <ellipse cx="1322" cy="790" rx="24" ry="80" fill="#75684c" opacity=".85" />
        <ellipse cx="1450" cy="845" rx="60" ry="24" fill="#3a4a30" opacity=".5" />
        <ellipse cx="1575" cy="750" rx="60" ry="34" fill="#41553a" opacity=".6" />
      </g>
      <g filter="url(#soft)">
        <path d="M872 232q12-18 40-15l-3 25-10 24-22-22z" fill="#17452a" />
        <path d="M895 288q20-8 30 4l12 32q-12 4-25-12-16-10-17-24z" fill="#234a2a" />
        <path d="M1315 792l8 6 6 24-6 12-8-14z" fill="#d8cdbc" />
        <path d="M1021 518l21-10v20l-16-2z" fill="#0e3322" />
        <path d="M789 650q12 10 20 50l-6 6q-12-30-14-56z" fill="#97907c" opacity=".6" />
      </g>
      <g fill="none" stroke="#23301f" strokeWidth="1.600" opacity=".5" filter="url(#soft)">
        <path d="M1382 870l-12-40M1375 850q30-20 80-35M1378 858q45-12 100-10M1380 850q20 12 50 20M1378 846q30 2 110 22M1376 842q20-30 70-50" />
      </g>
      <rect x="738" y="179" width="941" height="691" filter="url(#grain)" className="mix-blend-overlay" opacity=".6" />
      <g fill="none" stroke="#a9aba6" strokeWidth="2" opacity=".55">
        <path d="M739 308L765 318L785 322L805 310M940 312L975 280L1000 255L1042 262M836 180V230M892 300L895 280" />
        <path d="M1118 740L1125 790L1128 810L1115 835L1112 850L1128 870" />
      </g>
      <g fill="none" stroke="#e6e6de" strokeWidth="1.200" strokeDasharray="2 3" opacity=".75">
        <path d="M739 740L752 790L765 820L820 860L895 868M765 825L745 850L739 865M1053 750L1037 755L1040 780L1048 795L1040 800L1050 815L1042 868M1318 722L1316 740M1318 834L1318 850L1326 855L1322 870M1555 740L1575 760L1572 785L1590 795M1590 775L1608 782L1612 795L1660 808" />
      </g>
      <g fill="none" strokeLinejoin="round">
        {roads.map((d) => <path key={d} d={d} stroke="#4a401f" strokeWidth="4" />)}
        {roads.map((d) => <path key={d} d={d} stroke="#b8a055" strokeWidth="1.900" />)}
      </g>
      <Lab x={767} y={184} w={81} t="Santa Teresa" />
      <Lab x={798} y={204} w={75} t="Huehuetoca" />
      <Lab x={999} y={193} t="Tizayuca" />
      <Lab x={897} y={226} w={67} t="Zumpango" />
      <Lab x={826} y={276} w={70} t="Teoloyucan" />
      <Lab x={797} y={303} t="Tepotzotlán" />
      <Lab x={895} y={332} w={35} t="tepec" />
      <Lab x={957} y={349} w={74} t="Ojo de Agua" />
      <Lab x={788} y={356} t="Cuautitlán" />
      <Lab x={737} y={389} w={64} t="ad Nicolás" />
      <Lab x={737} y={402} w={40} t="omero" />
      <Shield x={781} y={416} t="57D" />
      <Shield x={877} y={248} t="57D" />
      <Shield x={984} y={238} t="9" />
      <Shield x={1032} y={236} t="85" />
      <Shield x={1034} y={512} t="136" />
      <Shield x={1007} y={535} t="57D" />
      <Shield x={881} y={727} t="95D" />

      <g clipPath="url(#aoi)">
        <rect x="755" y="230" width="365" height="540" fill="#b90e10" filter="url(#heat)" />
        <g filter="url(#blur)">
          <ellipse cx="1015" cy="590" rx="65" ry="55" fill="#8c0006" opacity=".55" />
          <ellipse cx="985" cy="470" rx="30" ry="80" fill="#9a0008" opacity=".5" />
          <ellipse cx="965" cy="645" rx="36" ry="40" fill="#8c0006" opacity=".5" />
          <ellipse cx="1035" cy="375" rx="28" ry="24" fill="#97000a" opacity=".5" />
          <ellipse cx="880" cy="460" rx="30" ry="24" fill="#a00808" opacity=".4" />
          <path d="M870 440l20-45 40-15 30 30 5 50-30-20-20 15z" fill="#cf2417" opacity=".55" />
          <ellipse cx="1020" cy="660" rx="30" ry="25" fill="#c01c14" opacity=".5" />
        </g>
        <g fill="#f3a183" opacity=".75" filter="url(#bits)">
          <path d="M874 350l16 2 12 7 8 0-4 3-26-6zM888 368l16-2v3zM820 494l12-5v4zM838 560l16 4-2 8-16-4zM812 430l9 2-2 8zM822 492l8 2-3 6zM892 632l7-4 2 8zM876 692l9 4-4 5zM896 408l24 7 18 0-4 4-32-4zM875 300l10 4 0 10-8-4zM820 700l30 3-10 6zM930 670l8 20 16 12-8 4-16-14zM890 496l12-4 4 12-12 2z" />
        </g>
        <g stroke="#d8dcd0" strokeWidth="1.500" opacity=".8" filter="url(#bits)" fill="none" strokeDasharray="2 9">
          <path d="M835 280l6 60 14 50-6 60 2 60M850 300l8 90 20 60M860 470l20 30 10 50M830 390l30 20" />
        </g>
        <g filter="url(#bits)">
          <path d="M892 610l12 3 10-4 10 1 1 6 14 2-2 6 14 8 2 4-9-1-6-4-12 6-12-4-5-9-12-3z" fill="#a3a09a" />
        </g>
        <path d="M900 616l3-5 16-1" fill="none" stroke="#6b6030" strokeWidth="1.500" />
        <path d="M822 282l5-3 5 6-3 8-6-2zM805 316l7 1-1 8-8 2zM834 272l3 3 0 10-4-8zM775 463l8 2 3 4-8 1zM1020 702l10 2 8 8-6 1-8-4z" fill="#5c6350" />
        <path d="M954 700l7 1 2 5-6-1zM816 356l6 0-2 3zM795 378l4 2 1 6-5 2z" fill="#0f2c1c" />
      </g>
      <polygon points={AREA} fill="none" stroke="#4d84c0" strokeWidth="2.600" />

      <Lab x={735} y={621} t="an" />
      <Lab x={735} y={634} t="do" />
      <Shield x={742} y={654} t="5D" />
      <Shield x={1155} y={751} t="115" />
      <Shield x={1606} y={795} t="150D" />
      <Shield x={1570} y={859} t="190" />
      <Shield x={1070} y={877} t="" />
      <Lab x={791} y={738} a="middle" g s={16} w={51} t="Parque" />
      <Lab x={791} y={754} a="middle" g s={16} w={63} t="Nacional" />
      <Lab x={791} y={771} a="middle" g s={16} w={65} t="Cumbres" />
      <Lab x={791} y={787} a="middle" g s={16} w={76} t="del Ajusco" />
      <Lab x={884} y={765} a="middle" w={69} t="San Miguel" />
      <Lab x={886} y={779} a="middle" w={48} t="Topilejo" />
      <Lab x={986} y={770} a="middle" w={27} t="Villa" />
      <Lab x={986} y={784} a="middle" w={63} t="Milpa Alta" />
      <Lab x={1112} y={723} t="cas" />
      <Lab x={1169} y={842} w={78} t="Amecameca" />
      <Lab x={1298} y={743} a="middle" g s={16} w={51} t="Parque" />
      <Lab x={1298} y={760} a="middle" g s={16} w={63} t="Nacional" />
      <Lab x={1297} y={776} a="middle" g s={16} w={93} t="Iztaccíhuatl -" />
      <Lab x={1298} y={793} a="middle" g s={16} w={96} t="Popocatépetl" />
      <Lab x={1480} y={808} w={75} t="Huejotzingo" />
      <Lab x={1619} y={773} t="Zacatelco" />
      <Lab x={1650} y={803} t="Papalotla" />
      <Lab x={1619} y={820} a="middle" w={88} t="San Francisco" />
      <Lab x={1619} y={834} a="middle" w={48} t="Ocotlán" />
      <Lab x={1616} y={850} w={72} t="Sanctorum" />
      <path d="M738.500 870V179.500H1679" fill="none" stroke="#a0a0a0" />
    </svg>
  );
}

const Field = ({ children, c = "" }: P) => (
  <div className={`flex shrink-0 items-center rounded-[3px] border border-[#aeaeae] bg-white text-[#222] ${c}`}>{children}</div>
);
const Spin = ({ c = "w-[14px]" }: P) => (
  <div className={`ml-auto flex h-full flex-col items-center justify-center border-l border-[#b5b5b5] bg-[#f6f6f6] ${c}`}>
    <Arrow d="up" />
    <Arrow d="down" />
  </div>
);

function StatusBar() {
  return (
    <footer className="flex h-[31px] shrink-0 items-center border-t border-[#c4c4c4] bg-[#eee] text-[12px] text-[#222]">
      <Field c="ml-1 h-[24px] w-[208px] pl-[9px]">
        <Ico c="h-[13px] w-[13px]"><circle cx="10" cy="10" r="7.500" stroke="#888" strokeWidth="2" /><path d="M16 16l7 7" stroke="#888" strokeWidth="2.200" /></Ico>
        <T w={118} c="ml-[7px] text-[13px] text-[#8a8a8a]">Type to locate (⌘K)</T>
      </Field>
      <div className="w-[557px]" />
      <T w={60}>Coordinate</T>
      <Field c="ml-[3px] h-[23px] w-[127px] justify-center"><T w={109}>-11055156, 2179038</T></Field>
      <div className="ml-[4px]">
        <Ico c="h-[17px] w-[17px]"><path d="M8 3l11 17M3 8q4-9 8-5l9 12q1 7-5 7-6 0-8-4z" stroke="#333" strokeWidth="2" fill="#ddd" /><path d="M14 7q3-6 9-5M17 10q3-3 6-3M5 5l8 3M6 10l8 2M8 14l9 1" stroke="#333" strokeWidth="1.800" /></Ico>
      </div>
      <T w={28} c="ml-[12px] font-medium">Scale</T>
      <Field c="ml-[4px] h-[24px] w-[93px] pl-[3px]">
        <T w={50}>1:370435</T>
        <div className="ml-auto flex h-full w-[20px] items-center justify-center border-l border-[#b5b5b5]"><Arrow d="down" /></div>
      </Field>
      <div className="ml-[12px]">
        <Ico c="h-[17px] w-[12px]"><path d="M5 11V5q7-10 14 0v6" stroke="#888" strokeWidth="2.500" /><rect x="0" y="11" width="24" height="13" rx="2" fill="#777" /></Ico>
      </div>
      <T w={50} c="ml-[9px] font-medium">Magnifier</T>
      <Field c="ml-[3px] h-[24px] w-[92px] pl-[4px]"><T w={30}>100%</T><Spin /></Field>
      <T w={45} c="ml-[10px]">Rotation</T>
      <Field c="ml-[9px] h-[24px] w-[93px] pl-[4px]"><T w={26}>0.0 °</T><Spin /></Field>
      <div className="ml-[6px]"><Check /></div>
      <T w={38} c="ml-[5px]">Render</T>
      <div className="ml-[14px]"><Ico c="h-[17px] w-[17px]"><Globe /></Ico></div>
      <T w={61} c="ml-[2px] font-medium">EPSG:3857</T>
      <div className="ml-[23px]">
        <Ico c="h-[17px] w-[17px]"><path d="M12 2c-14 0-15 16-3 17 6 0 5 2 9 4V17C28 12 23 2 12 2z" fill="#6a6a6a" /><path d="M6.500 11h.1M12 11h.1M17.500 11h.1" stroke="#fff" strokeWidth="3" strokeLinecap="round" /></Ico>
      </div>
      <svg width="12" height="12" viewBox="0 0 12 12" className="ml-auto mr-[2px] self-end">
        <path d="M1 11L11 1M5 11l6-6M9 11l2-2" stroke="#aaa" strokeWidth="1" strokeDasharray="1 2" />
      </svg>
    </footer>
  );
}

/* ---------- layer properties dialog ---------- */
const side: [string, number, React.ReactNode][] = [
  ["Information", 64, <Info />],
  ["Source", 39, <g><circle cx="14" cy="14" r="7" fill="#dfe8f2" stroke="#d4dbe2" strokeWidth="4" strokeDasharray="3 2" /><circle cx="14" cy="14" r="5" fill="#7f9fca" /><WrenchShape /></g>],
  ["Symbology", 63, null],
  ["Transparency", 75, <g><rect x="2" y="1" width="22" height="16" fill="#dfe5ee" /><path d="M5 5l6-2 3 5-5 4zM15 3h7l-3 9-4-4z" fill="#8ba6cc" /><path d="M0 19h24v3H0z" fill="#eee" /><rect width="3" height="17" fill="#eee" /></g>],
  ["Histogram", 58, <g><rect x="1" y="3" width="23" height="15" fill="#eceff2" /><path d="M4 12l5-4 4 5 4-2 6 4" stroke="#5b85c0" /><rect y="3" width="3" height="15" fill="#ccc" /></g>],
  ["Rendering", 57, null],
  ["Temporal", 51, <Clock />],
  ["Pyramids", 51, <g><path d="M6 7l6-3 6 3 6 12H0z" fill="#d9d9d9" stroke="#bbb" /><path d="M4 14l4-5 5 6 4-6 4 7M2 18l6-4 8 4" stroke="#f8f8f8" strokeWidth="2" /></g>],
  ["Elevation", 51, <g><rect x="15.500" y="1" width="8" height="16" fill="#f7e52c" stroke="#c4a000" /><rect x=".5" y="16" width="8" height="8" fill="#f7e52c" stroke="#c4a000" /><path d="M12 21V3M8 7l4-5 4 5M6 20h12" stroke="#333" strokeWidth="2" /></g>],
  ["Metadata", 52, <g><rect x="3" y="0" width="18" height="24" fill="#fafafa" stroke="#ccc" /><path d="M6 5h9M6 9h8M6 13h7M6 17h12M6 20h12" stroke="#999" /><path d="M23 3l-8 12" stroke="#e0762a" strokeWidth="4" /><path d="M13.500 14l3.500 2-4 3z" fill="#333" /></g>],
  ["Legend", 41, <g><path d="M8 5h8M8 12h12M8 19h6" stroke="#999" strokeWidth="2" /><rect x="2" y="1.500" width="5" height="5" fill="#f5a800" stroke="#fc3" /><rect x="2" y="8.500" width="5" height="5" fill="#d84800" stroke="#f30" /><rect x="2" y="15.500" width="5" height="5" fill="#1f9a50" stroke="#3c6" /></g>],
  ["Display", 40, <path d="M4 1h16q3 0 3 4v6q0 4-3 4h-7q-1 5-6 6 2-3 1-6H4q-3 0-3-4V5q0-4 3-4z" fill="#ecdf86" stroke="#c4b45a" />],
  ["Attribute Tables", 89, <g><rect x="1" y="2" width="22" height="20" fill="#e9f1fa" stroke="#8fb2dc" /><rect x="1" y="2" width="22" height="5" fill="#9cc0ea" /><path d="M4 10h4M10 10h4M16 10h4M4 13h4M10 13h4M16 13h4M4 16h4M10 16h4M16 16h4M4 19h4M10 19h4M16 19h4" stroke="#7ba0cc" /></g>],
  ["QGIS Server", 69, <g><path d="M14 8v7M5 15h14" stroke="#ccc" strokeWidth="1.500" /><g stroke="#d8d8d8"><rect x="11" y="1" width="8" height="7" fill="#3d6db5" /><rect x="1" y="8" width="8" height="7" fill="#3d6db5" /><rect x="16" y="13" width="8" height="7" fill="#3d6db5" /></g><path d="M10 10h10M0 17h10M15 22h10" stroke="#ddd" strokeWidth="2" /></g>],
];

const Combo = ({ text, w, c, car = "w-[22px]" }: { text: string; w: number; c: string; car?: string }) => (
  <div className={`flex h-6 shrink-0 items-center rounded-[3px] border border-[#aeaeae] bg-linear-to-b from-white to-[#efefef] pl-1 text-black ${c}`}>
    <T w={w}>{text}</T>
    <div className="ml-auto"><Caret c={car} /></div>
  </div>
);
const Btn = ({ children, c }: P) => (
  <div className={`flex h-6 shrink-0 items-center justify-center rounded-[3px] border border-[#aeaeae] bg-linear-to-b from-white to-[#f0f0f0] text-black ${c}`}>{children}</div>
);
const Row = ({ children, c = "" }: P) => <div className={`flex shrink-0 items-center pl-[13px] ${c}`}>{children}</div>;
const FL = ({ w, c, children }: { w: number; c: string; children: string }) => (
  <div className={`flex shrink-0 items-center ${c}`}><T w={w}>{children}</T></div>
);

const classes = [
  ["0", "0.0000", "bg-[#6d0000]"],
  ["0.13", "0.1300", "bg-[#ad0f09]"],
  ["0.26", "0.2600", "bg-[#d12519]"],
  ["0.39", "0.3900", "bg-[#ec5334]"],
  ["0.52", "0.5200", "bg-[#f4825a]"],
  ["0.65", "0.6500", "bg-[#f5a887]"],
  ["", "", "bg-[#f9cab2]"],
];

function Dialog() {
  return (
    <div className="absolute left-[1040px] top-[34px] flex h-[686px] w-[876px] flex-col overflow-hidden rounded-[10px] bg-[#efefef] text-[13px] text-[#2b2b2b] shadow-[0_18px_40px_4px_rgba(0,0,0,0.5),0_0_2px_rgba(0,0,0,0.6)]">
      <header className="flex h-[29px] shrink-0 items-center gap-2 border-b border-[#c9c4c1] bg-[#fbf5f1] pl-2">
        <i className="h-3 w-3 rounded-full border border-[#e0443e] bg-[#fc5753]" />
        <i className="h-3 w-3 rounded-full border border-[#c8c4c1] bg-[#dcd8d5]" />
        <i className="h-3 w-3 rounded-full border border-[#2aae34] bg-[#36c846]" />
        <T w={801} flat c="ml-[1px] font-bold text-[#4d4a48]">Layer Properties — ECO4ESIPTJPL.001_Evaporative_Stress_Index_PT_JPL_ESIavg_doy2022095170707_aid0001 — Symbolo...</T>
      </header>
      <div className="flex min-h-0 flex-1">
        <aside className="flex w-[133px] shrink-0 flex-col bg-[#676767] text-[12px] text-white">
          <div className="mx-px flex h-[23px] items-center rounded-[2px] bg-white pl-2">
            <Ico c="h-[13px] w-[13px]"><circle cx="10" cy="10" r="8" stroke="#888" strokeWidth="2" /><path d="M16 16l7 7" stroke="#888" strokeWidth="2.200" /></Ico>
          </div>
          <div className="h-[6px]" />
          {side.map(([n, w, ic]) => (
            <div key={n} className={`flex h-9 shrink-0 items-center ${n === "Symbology" ? "bg-[#efefef] pl-[7px] text-black" : n === "QGIS Server" ? "mt-[2px] pl-[5px]" : "pl-[5px]"}`}>
              <div className="h-6 w-6 shrink-0">{ic ? <Ico>{ic}</Ico> : <Brush palette={n === "Symbology"} />}</div>
              <T w={w} c="ml-2">{n}</T>
            </div>
          ))}
        </aside>
        <div className="flex w-[743px] shrink-0 flex-col">
          <div className="flex h-[610px] shrink-0">
            <div className="flex w-[729px] flex-col">
              <div className="flex h-[22px] shrink-0 items-center pl-[6px]">
                <svg width="12" height="9" viewBox="0 0 12 9"><path d="M.5 1h11L6 8.500z" fill="#333" /></svg>
                <T w={102} c="ml-[8px] font-bold">Band Rendering</T>
              </div>
              <div className="ml-[5px] flex h-[588px] flex-col overflow-hidden border-l border-t border-[#d4d4d4] bg-[#ebebeb]">
                <div className="mt-[10px] flex h-6 shrink-0 items-center pl-[10px]">
                  <FL w={73} c="w-[79px]">Render type</FL>
                  <Combo c="w-[175px]" w={146} text="Singleband pseudocolor" />
                </div>
                <Row c="mt-[9px] h-6">
                  <FL w={31} c="w-[178px]">Band</FL>
                  <Combo c="w-[526px]" w={82} text="Band 1 (Gray)" />
                </Row>
                <Row c="mt-[6px] h-6">
                  <FL w={22} c="w-[178px]">Min</FL>
                  <Field c="h-6 w-[171px] pl-[2px]"><T>0</T></Field>
                  <FL w={25} c="ml-[6px] w-[178px]">Max</FL>
                  <Field c="h-6 w-[171px] pl-[2px]"><T>1</T></Field>
                </Row>
                <Row c="h-[30px] pl-[17px]">
                  <svg width="9" height="12" viewBox="0 0 9 12"><path d="M1 .5v11L8 6z" fill="#333" /></svg>
                  <T w={155} c="ml-[9px] font-bold">Min / Max Value Settings</T>
                </Row>
                <Row c="h-6">
                  <FL w={75} c="w-[239px]">Interpolation</FL>
                  <Combo c="w-[465px]" w={37} text="Linear" />
                </Row>
                <Row c="mt-[6px] h-[28px]">
                  <FL w={66} c="w-[239px]">Color ramp</FL>
                  <div className="flex h-[28px] w-[453px] items-center justify-center rounded-[3px] border border-[#aeaeae] bg-[#f9f9f9]">
                    <div className="h-4 w-[443px] bg-[linear-gradient(to_right,#6b0000,#ad0f09_13%,#d12519_26%,#ec5334_39%,#f4825a_52%,#f5a887_65%,#f9cab2_78%,#fde5d8_90%,#fff5f0)]" />
                  </div>
                  <div className="flex h-[28px] w-[12px] items-center justify-center rounded-[3px] border border-[#aeaeae] bg-[#f9f9f9]"><Arrow d="down" /></div>
                </Row>
                <Row c="mt-[6px] h-6">
                  <FL w={95} c="w-[239px]">Label unit suffix</FL>
                  <Field c="h-6 w-[465px]" />
                </Row>
                <Row c="mt-[7px] h-[23px]">
                  <FL w={90} c="w-[239px]">Label precision</FL>
                  <Field c="h-[23px] w-[465px] pl-[4px]">
                    <T>4</T>
                    <svg width="13" height="10" viewBox="0 0 13 10" className="ml-auto mr-[10px]"><path d="M0 5l4-5h9v10H4z" fill="#999" /><path d="M5.500 2.500l5 5M10.500 2.500l-5 5" stroke="#fff" /></svg>
                    <div className="flex h-full"><Spin /></div>
                  </Field>
                </Row>
                <Row c="mt-[7px] h-[250px]">
                  <div className="flex h-full w-[704px] border border-[#b4b4b4] bg-white">
                    <div className="flex flex-1 flex-col overflow-hidden">
                      <div className="flex h-[17px] shrink-0 border-b border-[#b4b4b4] bg-linear-to-b from-white to-[#ececec] text-[12px] leading-[17px]">
                        <div className="w-[100px] border-r border-[#c4c4c4] pl-[2px]"><T w={29} flat>Value</T></div>
                        <div className="w-[59px] border-r border-[#c4c4c4] pl-[2px]"><T w={28} flat>Color</T></div>
                        <div className="pl-[3px]"><T w={28} flat>Label</T></div>
                      </div>
                      {classes.map(([v, l, bg], i) => (
                        <div key={i} className="flex h-[38px] shrink-0 items-center">
                          <div className="flex w-[111px] pl-[23px]"><T>{v}</T></div>
                          <div className={`h-9 w-9 rounded-[6px] ${bg}`} />
                          <div className="flex pl-[15px] text-[#adadad]"><T w={l ? 44 : undefined}>{l}</T></div>
                        </div>
                      ))}
                    </div>
                    <div className="flex w-[14px] flex-col border-l border-[#c0c0c0] bg-[#e9e9e9]">
                      <div className="flex h-[14px] items-center justify-center border-b border-[#c0c0c0] bg-[#fafafa]"><Arrow d="up" /></div>
                      <div className="h-[146px] border-b border-[#c0c0c0] bg-white" />
                      <div className="mt-auto flex h-[16px] items-center justify-center bg-[#f4f4f4]"><Arrow d="down" /></div>
                    </div>
                  </div>
                </Row>
                <Row c="mt-[6px] h-6">
                  <FL w={34} c="w-[40px]">Mode</FL>
                  <Combo c="w-[109px]" w={69} text="Continuous" />
                  <FL w={47} c="ml-[429px] w-[53px]">Classes</FL>
                  <Field c="h-[23px] w-[73px] pl-[4px]"><T c="text-[#c0c0c0]">9</T><Spin /></Field>
                </Row>
                <Row c="mt-[9px] h-6 gap-[6px]">
                  <Btn c="mr-px w-[79px]"><T w={48}>Classify</T></Btn>
                  <Btn c="w-[28px]"><Ico c="h-[15px] w-[15px]"><path d="M9 1h6v8h8v6h-8v8H9v-8H1V9h8z" fill="#fff" stroke="#4f8f4f" strokeWidth="1.500" /><path d="M12 4v16M4 12h16" stroke="#4f8f4f" strokeWidth="1.800" /></Ico></Btn>
                  <Btn c="w-[28px]"><Ico c="h-[15px] w-[15px]"><rect x="1" y="8" width="22" height="7" fill="#fff" stroke="#e05050" strokeWidth="1.500" /><path d="M4 11.500h16" stroke="#e05050" strokeWidth="2.200" /></Ico></Btn>
                  <Btn c="w-[28px]"><Ico c="h-4 w-4"><path d="M2 14q1-8 8-7V3l7 6-7 6v-4q-4 0-5 6zM22 9q-1 9-8 8v4l-6-6 6-6v4q4 0 5-5z" fill="#9ccb9c" stroke="#7fb27f" strokeWidth=".8" /></Ico></Btn>
                  <Btn c="w-[28px]"><Ico c="h-4 w-4"><FolderShape /></Ico></Btn>
                  <Btn c="w-[28px]"><Ico c="h-4 w-4"><Floppy /><rect x="14" y="14" width="10" height="10" rx="2" fill="#5b9a5b" /><path d="M16.500 21.500l5-5" stroke="#fff" strokeWidth="2" /></Ico></Btn>
                  <Btn c="ml-[332px] w-[116px]"><T w={107}>Legend Settings...</T></Btn>
                </Row>
                <Row c="mt-[12px] h-[15px] items-start gap-[5px]">
                  <Check on={false} />
                  <T w={141} c="-mt-[3px]">Clip out of range values</T>
                </Row>
              </div>
            </div>
            <div className="mt-[2px] flex w-[14px] flex-col border-l border-[#c0c0c0] bg-[#e6e6e6]">
              <div className="flex h-[14px] items-center justify-center border-b border-[#c0c0c0] bg-[#fafafa]"><Arrow d="up" /></div>
              <div className="h-[391px] border-b border-[#c0c0c0] bg-linear-to-r from-white to-[#f4f4f4]" />
              <div className="mt-auto flex h-[14px] items-center justify-center border-t border-[#c0c0c0] bg-[#fafafa]"><Arrow d="down" /></div>
            </div>
          </div>
          <div className="ml-1 flex h-[14px] w-[725px] shrink-0 items-center border-t border-[#c8c8c8] bg-linear-to-b from-white to-[#f0f0f0]">
            <div className="flex h-full w-[14px] items-center border-r border-[#c0c0c0]"><Arrow d="left" /></div>
            <div className="ml-auto flex h-full w-[14px] items-center border-x border-[#c0c0c0]"><Arrow d="right" /></div>
          </div>
          <div className="mt-[6px] flex pl-1">
            <Btn c="w-[80px]"><T w={28}>Help</T></Btn>
            <Btn c="ml-[6px] w-[79px]"><T w={31} c="ml-[18px]">Style</T><Caret c="ml-[14px] w-[12px] scale-75" /></Btn>
            <Btn c="ml-[7px] w-[80px]"><T w={35}>Apply</T></Btn>
            <Btn c="ml-[321px] w-[80px]"><T w={41}>Cancel</T></Btn>
            <div className="ml-[6px] flex h-6 w-[80px] shrink-0 items-center justify-center rounded-[3px] border border-[#5b9be6] bg-linear-to-b from-white to-[#dfe9f5] text-black"><T w={18}>OK</T></div>
          </div>
        </div>
      </div>
    </div>
  );
}

/* ---------- color ramp menu ---------- */
const ramps: [string, number, string][] = [
  ["Blues", 33, "bg-[linear-gradient(to_right,#f7fbff,#6baed6,#08306b)]"],
  ["Cividis", 39, "bg-[linear-gradient(to_right,#00224e,#7c7b78,#fee838)]"],
  ["Greens", 43, "bg-[linear-gradient(to_right,#f7fcf5,#74c476,#00441b)]"],
  ["Greys", 35, "bg-[linear-gradient(to_right,#fafafa,#888,#050505)]"],
  ["Magma", 44, "bg-[linear-gradient(to_right,#000004,#50127b,#b6377a,#fb8861,#fcfdbf)]"],
  ["Mako", 32, "bg-[linear-gradient(to_right,#0b0405,#3d3b72,#3487a6,#49c1ad,#def5e5)]"],
  ["RdGy", 33, "bg-[linear-gradient(to_right,#ca0020,#f4a582,#fff,#bababa,#404040)]"],
  ["Reds", 30, "bg-[linear-gradient(to_right,#fff5f0,#fb8a6a,#cb181d,#67000d)]"],
  ["Rocket", 42, "bg-[linear-gradient(to_right,#03051a,#701f57,#e13342,#f6a47c,#faebdd)]"],
  ["Spectral", 50, "bg-[linear-gradient(to_right,#d7191c,#fdae61,#ffffbf,#abdda4,#2b83ba)]"],
  ["Turbo", 35, "bg-[linear-gradient(to_right,#30123b,#4686fb,#1ae4b6,#a2fc3c,#faba39,#e4460a,#7a0403)]"],
  ["Viridis", 37, "bg-[linear-gradient(to_right,#440154,#31688e,#35b779,#fde725)]"],
];
function RampMenu() {
  const row = "flex h-6 items-center pl-[27px]";
  const sep = "ml-[5px] mr-[3px] mb-px h-px bg-[#bdbdbd]";
  return (
    <div className="absolute left-[1450px] top-[275px] w-[248px] border-b border-l border-t border-[#888] bg-white text-[13px] text-[#2b2b2b]">
      <div className={row}><T w={108}>Invert Color Ramp</T></div>
      <div className={sep} />
      {ramps.map(([n, w, g]) => (
        <div key={n} className="flex h-6 items-center pl-[6px]">
          <div className={`h-4 w-4 ${g}`} />
          <T w={w} c="ml-[5px]">{n}</T>
        </div>
      ))}
      <div className={sep} />
      <div className={row}>
        <T w={95}>All Color Ramps</T>
        <div className="ml-auto mr-[2px]"><Arrow d="right" /></div>
      </div>
      <div className={sep} />
      <div className={row}><T w={153}>Create New Color Ramp...</T></div>
      <div className={row}><T w={106}>Edit Color Ramp...</T></div>
      <div className={row}><T w={112}>Save Color Ramp...</T></div>
    </div>
  );
}

/* ---------- menu bar ---------- */
const menus: [string, number, string][] = [
  ["QGIS", 33, "w-[53px] font-bold"],
  ["Project", 43, "w-[65px]"],
  ["Edit", 22, "w-[42px]"],
  ["View", 30, "w-[50px]"],
  ["Layer", 33, "w-[54px]"],
  ["Settings", 50, "w-[71px]"],
  ["Plugins", 44, "w-[65px]"],
  ["Vector", 40, "w-[60px]"],
  ["Raster", 39, "w-[59px]"],
  ["Database", 58, "w-[78px]"],
  ["Web", 27, "w-[48px]"],
  ["Mesh", 33, "w-[53px]"],
  ["HCMGIS", 51, "w-[71px]"],
  ["Processing", 67, "w-[88px]"],
  ["Window", 49, "w-[69px]"],
  ["Help", 28, "w-[99px]"],
];
function MenuBar() {
  return (
    <nav className="absolute inset-x-0 top-0 flex h-6 items-center bg-[linear-gradient(to_right,#a9dfd5,#bde2c0_14%,#d7e09c_27%,#ead97f_42%,#edd376_56%,#cfc89e_75%,#a9c0c8_86%,#9cbbd4)] pl-[19px] text-[13px] text-[#1d211f]">
      <div className="w-[34px]">
        <svg width="14" height="17" viewBox="0 0 14 17">
          <path d="M10 0q0 3-3.200 4Q6.700 1 10 0zM7 5q2-1.300 4-.6 1.500.5 2.200 1.600-3.600 2.500.5 6Q12 16.300 10 16q-1.500-.9-3 0-2.500 1-4.700-4Q.5 6 3.500 4.500 5 4 7 5z" fill="#1c2321" />
        </svg>
      </div>
      {menus.map(([n, w, c]) => (
        <div key={n} className={`flex shrink-0 items-center ${c}`}><T w={w} flat>{n}</T></div>
      ))}
      <div className="ml-auto flex items-center pr-[14px]">
        <Ico c="h-[15px] w-[15px]"><circle cx="12" cy="12" r="10.500" stroke="#3a4442" strokeWidth="1.800" /><path d="M9 7l8 5-8 5z" fill="#3a4442" /></Ico>
        <svg width="26" height="13" viewBox="0 0 26 13" className="ml-[17px]">
          <rect x=".6" y=".6" width="21.500" height="11.500" rx="3" fill="none" stroke="#555" />
          <rect x="2" y="2" width="16" height="8.800" rx="1.500" fill="#111" />
          <path d="M12 1L7 7.200h3.500L8.500 12.500 15 5.800h-3.800z" fill="#cfd6d4" stroke="#222" strokeWidth=".8" />
          <path d="M24 4.500v4" stroke="#555" strokeWidth="1.500" />
        </svg>
        <svg width="18" height="13" viewBox="0 0 18 13" className="ml-[18px]" fill="none" stroke="#111" strokeWidth="2.200">
          <path d="M1 4.500q8-6.500 16 0M3.800 7.600q5.200-4.200 10.400 0" />
          <path d="M9 13L6.300 10.200q2.700-2 5.400 0z" fill="#111" stroke="none" />
        </svg>
        <Ico c="ml-[19px] h-[14px] w-[14px]"><circle cx="10" cy="10" r="8" stroke="#222" strokeWidth="2.400" /><path d="M16 16l7 7" stroke="#222" strokeWidth="2.600" /></Ico>
        <svg width="15" height="14" viewBox="0 0 15 14" className="ml-[19px]">
          <rect x=".7" y=".7" width="13.500" height="5" rx="2.500" fill="none" stroke="#333" strokeWidth="1.300" />
          <circle cx="3.500" cy="3.200" r="1.500" fill="#333" />
          <rect y="7.500" width="15" height="6.300" rx="3.100" fill="#333" />
          <circle cx="11.500" cy="10.600" r="1.700" fill="#aac0cb" />
        </svg>
        <T w={63} c="ml-[17px]" flat>Wed Oct 4</T>
        <T w={60} c="ml-[9px]" flat>10:43 AM</T>
      </div>
    </nav>
  );
}

/* ---------- wallpaper ---------- */
function Wallpaper() {
  return (
    <svg className="absolute inset-0" width="1916" height="908" viewBox="0 0 1916 908">
      <defs>
        <linearGradient id="top"><stop offset="0" stopColor="#59afe0" /><stop offset="1" stopColor="#5bb4e6" /></linearGradient>
        <linearGradient id="sun">
          <stop offset="0" stopColor="#f1e069" /><stop offset=".22" stopColor="#edc347" /><stop offset=".4" stopColor="#ecaa2e" />
          <stop offset=".68" stopColor="#e8a238" /><stop offset=".72" stopColor="#dd9a58" /><stop offset=".77" stopColor="#3d88c4" />
          <stop offset=".955" stopColor="#3a89cc" /><stop offset=".98" stopColor="#d59a62" /><stop offset="1" stopColor="#f0a348" />
        </linearGradient>
        <linearGradient id="edge" x1="0" y1="0" x2="0" y2="1">
          <stop offset="0" stopColor="#5fb4e0" /><stop offset=".1" stopColor="#c3a23c" /><stop offset=".5" stopColor="#b8872a" /><stop offset=".75" stopColor="#bf6a24" /><stop offset="1" stopColor="#2f7fc0" />
        </linearGradient>
        <linearGradient id="strip">
          <stop offset="0" stopColor="#2b7fc2" /><stop offset=".15" stopColor="#4e7da4" /><stop offset=".28" stopColor="#b5682c" /><stop offset="1" stopColor="#b8801f" />
        </linearGradient>
        <linearGradient id="or1" x1="0" y1="0" x2="0" y2="1"><stop offset="0" stopColor="#b54a10" /><stop offset=".35" stopColor="#ea5d1c" /><stop offset=".6" stopColor="#f4651f" /><stop offset="1" stopColor="#d85a1a" /></linearGradient>
        <linearGradient id="or2" x1="0" y1="0" x2="0" y2="1"><stop offset="0" stopColor="#d88424" /><stop offset=".4" stopColor="#f6982c" /><stop offset=".7" stopColor="#f58f28" /><stop offset="1" stopColor="#f27c1e" /></linearGradient>
      </defs>
      <rect width="1916" height="908" fill="#b5682c" />
      <rect width="6" height="908" fill="url(#edge)" />
      <rect y="20" width="1916" height="16" fill="url(#top)" />
      <path d="M348 22L328 34V50H1916V22z" fill="url(#sun)" />
      <rect y="895" width="520" height="13" fill="url(#strip)" />
      <path d="M510 895L517 908H720L708 895z" fill="#b04a12" />
      <path d="M708 895L714 908H1160L1150 895z" fill="#b06018" />
      <path d="M900 895H1150L1164 908H900z" fill="#a83a10" />
      <path d="M1145 895L1160 908H1380L1386 895z" fill="#8e1c10" />
      <path d="M1386 895L1380 908H1640V895z" fill="#bd5516" />
      <rect x="1660" y="700" width="256" height="208" fill="url(#or1)" />
      <path d="M1862 707L1842 730L1679 863L1632 908H1916V700z" fill="url(#or2)" />
      <path d="M1862 707L1842 730L1679 863L1640 902" stroke="#f9ab4c" strokeWidth="2" fill="none" />
      <text x="1799" y="722" fontFamily="Inter" fontWeight="600" fontSize="13" fill="#fff">2023-10-…12.17 PM</text>
    </svg>
  );
}

/* ---------- callouts ---------- */
const nums: [string, number, number][] = [
  ["50", 192, 72], ["51", 827, 72], ["52", 13, 321], ["59", 329, 232], ["53", 648, 533], ["54", 1558, 124],
  ["55", 1609, 232], ["56", 1621, 346], ["56", 1790, 351], ["56", 1567, 540], ["57", 1537, 731], ["58", 1828, 592],
];
const head = (x: number, y: number, dx: number, dy: number) => `M${x + dx} ${y - dy}L${x} ${y}L${x + dx} ${y + dy}`;
function Callouts() {
  return (
    <svg className="pointer-events-none absolute inset-0" width="1916" height="908" viewBox="0 0 1916 908" fill="none" stroke="#ff7070" strokeLinecap="round" strokeLinejoin="round">
      <g strokeWidth="7">
        <path d={`${head(161, 14.5, 15.5, 13.500)}M162 14.500H228.500`} />
        <path d={`${head(813, 14.5, 15.5, 13.500)}M814 14.500H880.500`} />
      </g>
      <g strokeWidth="9">
        <path d={`${head(282.5, 239.5, 22.5, 17)}M284 239.500H373.500`} />
        <path d={`${head(107.5, 346.7, -22.5, 17)}M106 346.700H16.500`} />
        <path d={`${head(157.5, 440.5, 22.5, 17)}M158 440.500H247.500`} />
        <path d={`${head(682.5, 461.7, 22.5, 17)}M683 461.700H772.500`} />
        <path d={`${head(1456, 106.5, 22, 17)}M1458 106.500H1546.500`} />
        <path d={`${head(1586, 172.5, 22, 17)}${head(1716, 172.5, -22, 17)}M1588 172.500H1714`} />
        <path d={`${head(1597, 290.5, 22, 17)}M1599 290.500H1687.500`} />
        <path d={`${head(1527, 485.5, 22, 17)}M1529 485.500H1617.500`} />
        <path d={`${head(1441, 708.5, 22, 17)}M1443 708.500H1531.500`} />
        <path d="M1872.700 299L1889.700 277L1906.700 299M1889.700 279V367.500" />
        <path d="M1854.500 665.500L1871.500 687L1888.500 665.500M1871.500 685V596.500" />
      </g>
      <g stroke="none" fill="#ff7070" fontFamily="DejaVu Sans" fontWeight="bold" fontSize="62">
        {nums.map(([n, x, y]) => (
          <text key={`${x}`} x={x} y={y}>{n}</text>
        ))}
      </g>
    </svg>
  );
}

export default function App() {
  return (
    <main className="relative h-[908px] w-[1916px] overflow-hidden font-['Inter','Noto_Sans',sans-serif]">
      <Wallpaper />
      <MenuBar />
      <div className="absolute left-[1px] top-[34px] flex h-[867px] w-[1678px] flex-col overflow-hidden rounded-[10px] bg-[#eee] shadow-[0_8px_24px_rgba(0,0,0,0.45),0_0_1px_rgba(0,0,0,0.7)]">
        <header className="flex h-[29px] shrink-0 items-center gap-2 border-b border-[#c9c4c1] bg-[#fbf5f1] pl-2">
          <i className="h-3 w-3 rounded-full border border-[#c2bebb] bg-[#dcd8d5]" />
          <i className="h-3 w-3 rounded-full border border-[#c2bebb] bg-[#dcd8d5]" />
          <i className="h-3 w-3 rounded-full border border-[#c2bebb] bg-[#dcd8d5]" />
          <T w={159} flat c="ml-[691px] text-[13px] font-bold text-[#4d4a48]">*Untitled Project — QGIS</T>
        </header>
        <Toolbars />
        <div className="flex h-[691px] shrink-0">
          <div className="flex w-[737px] shrink-0 flex-col">
            <BrowserDock />
            <div className="flex h-[7px] shrink-0 items-center justify-center">
              <div className="h-px w-4 border-t border-dotted border-[#999]" />
            </div>
            <LayersDock />
          </div>
          <MapCanvas />
        </div>
        <StatusBar />
      </div>
      <Dialog />
      <RampMenu />
      <Callouts />
    </main>
  );
}
